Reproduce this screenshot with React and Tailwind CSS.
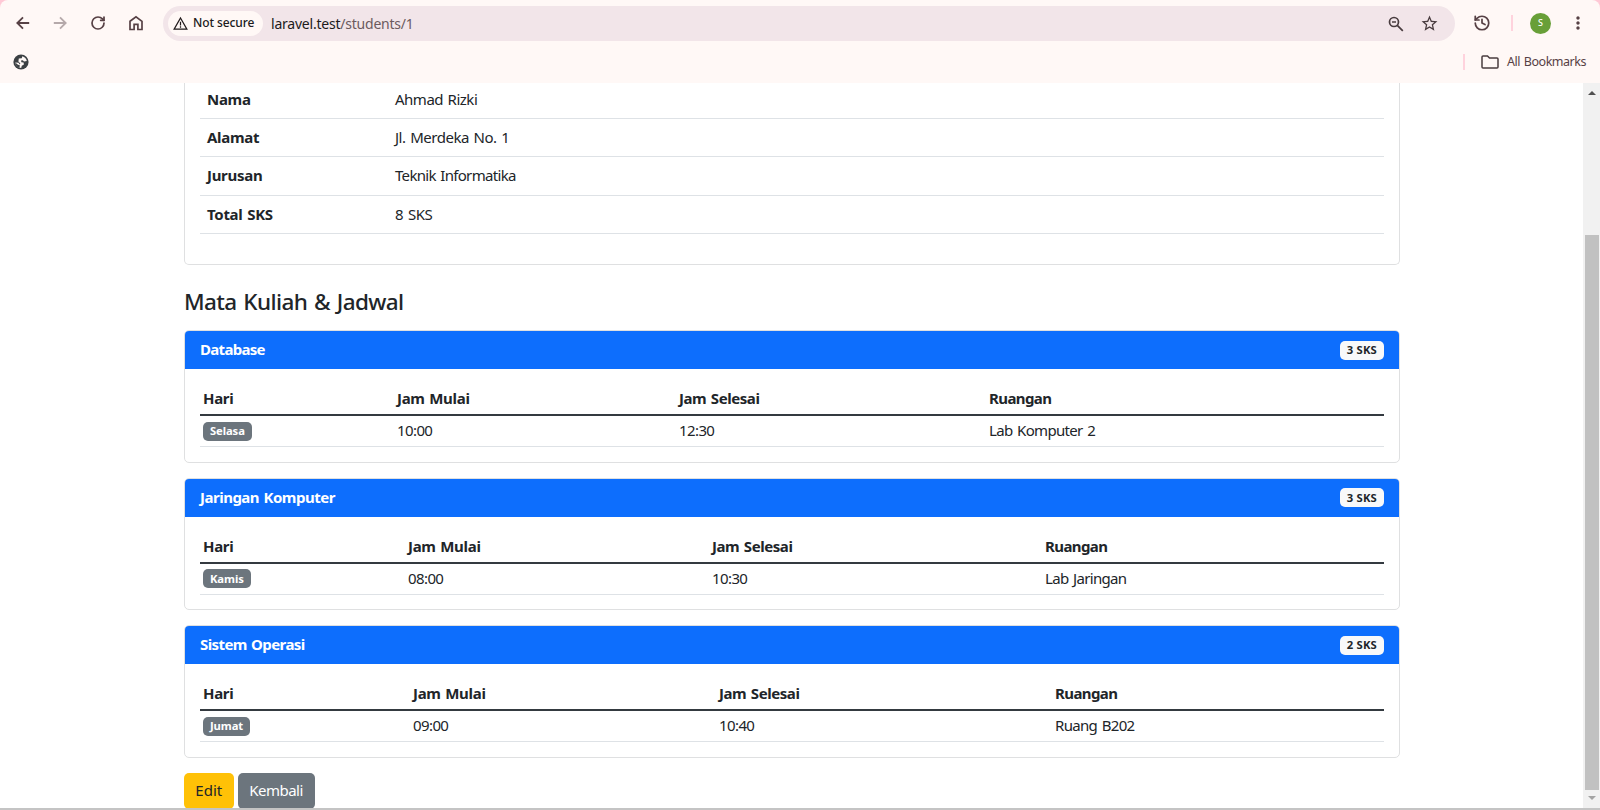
import { History, RotateCw } from "lucide-react";
import { MdStarBorder, MdMoreVert } from "react-icons/md";

const profile = [
  { label: "Nama", value: "Ahmad Rizki", tracking: "tracking-[-0.5px]" },
  { label: "Alamat", value: "Jl. Merdeka No. 1", tracking: "tracking-[-0.48px]" },
  { label: "Jurusan", value: "Teknik Informatika", tracking: "tracking-[-0.68px]" },
  { label: "Total SKS", value: "8 SKS", tracking: "tracking-[-0.4px]" },
];

const courses = [
  {
    name: "Database",
    sks: 3,
    day: "Selasa",
    start: "10:00",
    end: "12:30",
    room: "Lab Komputer 2",
    cols: "grid-cols-[193px_282px_310px_1fr]",
    tracking: "tracking-[-0.7px]",
  },
  {
    name: "Jaringan Komputer",
    sks: 3,
    day: "Kamis",
    start: "08:00",
    end: "10:30",
    room: "Lab Jaringan",
    cols: "grid-cols-[204px_304px_333px_1fr]",
    tracking: "tracking-[-0.5px]",
  },
  {
    name: "Sistem Operasi",
    sks: 2,
    day: "Jumat",
    start: "09:00",
    end: "10:40",
    room: "Ruang B202",
    cols: "grid-cols-[209px_306px_336px_1fr]",
    tracking: "tracking-[-0.6px]",
  },
];

function Arrow({ className }) {
  return (
    <svg viewBox="0 0 16 16" className={className} fill="none" stroke="currentColor" strokeWidth="1.8">
      <path d="M14.2 8H2.5M8 2.3 2.3 8 8 13.7" />
    </svg>
  );
}

function Browser() {
  return (
    <header className="h-[83px] shrink-0 rounded-t-[8px] bg-[#fff8f6] text-[#574145]">
      <div className="flex h-[46px] items-center">
        <Arrow className="ml-[15px] size-4" />
        <Arrow className="ml-[21px] size-4 rotate-180 text-[#b5a9aa]" />
        <RotateCw className="ml-[22px] size-4" strokeWidth={2.6} />
        <svg viewBox="0 0 16 16" className="ml-[22px] size-4" fill="none" stroke="currentColor" strokeWidth="1.7">
          <path d="M2 6.3 8 1.8l6 4.5v8.2H9.9V9.3H6.1v5.2H2z" />
        </svg>
        <div className="ml-[19px] flex h-[35px] w-[1292px] items-center rounded-full bg-[#f2e5e9] pl-[5px] text-[#201a1b]">
          <div className="flex h-[25px] w-[95px] items-center rounded-full bg-[#fff8f6] pl-[5px] whitespace-nowrap">
            <svg viewBox="0 0 16 16" className="size-[15px] shrink-0" fill="none" stroke="currentColor" strokeWidth="1.3">
              <path d="M8 2.2 14.8 14H1.2zM8 6.2v4M8 11v1.4" />
            </svg>
            <span className="ml-[5px] text-[12px] font-medium tracking-[-0.1px]">Not secure</span>
          </div>
          <span className="ml-[8px] text-[14px] tracking-[-0.22px]">
            laravel.test<span className="text-[#6b5a5e]">/students/1</span>
          </span>
          <svg viewBox="0 0 16 16" className="mt-px ml-auto size-4" fill="none" stroke="#493c3f" strokeWidth="1.7">
            <circle cx="6" cy="6" r="4.5" />
            <path d="m9.3 9.3 5.5 5.5M4 6h4" />
          </svg>
          <MdStarBorder className="mr-[16px] ml-[16px] size-[19px] text-[#493c3f]" />
        </div>
        <History className="ml-[18px] size-[18px]" strokeWidth={2.3} />
        <span className="ml-[20px] h-4 w-[2px] bg-[#ffd3dd]" />
        <span className="ml-[17px] flex size-[21px] items-center justify-center rounded-full bg-[#689f38] text-[9px] font-medium text-white">
          S
        </span>
        <MdMoreVert className="ml-[17px] size-[20px]" />
      </div>
      <div className="flex h-[32px] items-center">
        <svg viewBox="0 0 16 16" className="ml-[13px] size-[16px]">
          <circle cx="8" cy="8" r="7.6" fill="#3c4043" />
          <path
            d="M9.3 2.2Q13 3.2 13.8 7L11 7.4 9.8 6.2 8 6.6 8.4 8.2 10.6 8.6 10.9 10.6 8.8 11.8 8.2 13.9Q3 13.4 2.2 8.4L5.6 8.8 6.6 10.4 7.4 9.6 5.4 7.6 5.8 4.6 8.8 4.2z"
            fill="#fff8f6"
          />
          <path d="M2.2 8.4Q3 13.4 6.5 13.8L6.8 11.2 5 10.8z" fill="#3c4043" />
        </svg>
        <span className="ml-auto h-4 w-[2px] bg-[#ffd3dd]" />
        <svg viewBox="0 0 18 14" className="ml-[16px] h-[14px] w-[18px]" fill="none" stroke="#493c3f" strokeWidth="1.5">
          <path d="M1 2q0-1 1-1h4.5l2 2H16q1 0 1 1v8q0 1-1 1H2q-1 0-1-1z" />
        </svg>
        <span className="mr-[14px] ml-[8px] text-[12.5px] tracking-[-0.48px] [word-spacing:1px]">All Bookmarks</span>
      </div>
    </header>
  );
}

function CourseCard({ course }) {
  return (
    <section className="mb-[15px] h-[132.6px] rounded-[5px] border border-[#dfe0e1] bg-white">
      <div className="flex h-[38px] items-center justify-between rounded-t-[4px] bg-[#0d6efd] px-[15px]">
        <h6 className={`pb-[2px] text-[15px] font-bold text-white [word-spacing:1px] ${course.tracking}`}>
          {course.name}
        </h6>
        <span className="flex h-[19px] items-center rounded-[5px] bg-[#f8f9fa] px-[7px] text-[11.25px] font-bold tracking-[0.2px]">
          {course.sks} SKS
        </span>
      </div>
      <div className="px-[15px] pt-[15px]">
        <div className={`grid ${course.cols} h-[32px] items-center border-b-2 border-[#343a40] pb-[2px] font-bold [word-spacing:1px]`}>
          <span className="pl-[3px] tracking-[-0.3px]">Hari</span>
          <span className="pl-[4px] tracking-[-0.3px]">Jam Mulai</span>
          <span className="pl-[4px] tracking-[-0.42px]">Jam Selesai</span>
          <span className="pl-[4px] tracking-[-0.6px]">Ruangan</span>
        </div>
        <div className={`grid ${course.cols} h-[31px] items-center border-b border-[#dee2e6] [word-spacing:1.5px]`}>
          <span className="pl-[3px]">
            <span className="flex h-[19px] w-fit items-center rounded-[5px] bg-[#6c757d] px-[7px] text-[11.25px] font-bold tracking-[-0.1px] text-white">
              {course.day}
            </span>
          </span>
          <span className="pb-[2px] pl-[4px] tracking-[-0.6px]">{course.start}</span>
          <span className="pb-[2px] pl-[4px] tracking-[-0.6px]">{course.end}</span>
          <span className="pb-[2px] pl-[4px] tracking-[-0.7px]">{course.room}</span>
        </div>
      </div>
    </section>
  );
}

export default function App() {
  return (
    <div className="flex h-[810px] w-[1600px] flex-col overflow-hidden bg-[#ffc9d6] font-['Noto_Sans',sans-serif]">
      <Browser />
      <div className="flex min-h-0 flex-1 bg-white">
        <main className="w-[1583px] pl-[184px] text-[15px] leading-[22px] text-[#212529]">
          <div className="w-[1216px]">
            <section className="h-[182px] rounded-b-[5px] border border-t-0 border-[#dfe0e1] px-[15px]">
              {profile.map((row) => (
                <div
                  key={row.label}
                  className="flex h-[38.4px] items-center border-b border-[#dee2e6] pb-[1.5px] pl-[7px] [word-spacing:1.2px] first:h-[36px] first:pb-[3px]"
                >
                  <span className="w-[188px] font-bold tracking-[-0.3px]">{row.label}</span>
                  <span className={row.tracking}>{row.value}</span>
                </div>
              ))}
            </section>
            <h4 className="mt-[22px] mb-[14px] text-[22.5px] leading-[29px] font-medium tracking-[-0.6px] [word-spacing:1.5px]">
              Mata Kuliah &amp; Jadwal
            </h4>
            {courses.map((course) => (
              <CourseCard key={course.name} course={course} />
            ))}
            <div className="flex gap-[4px]">
              <button className="h-[36px] w-[49.5px] rounded-[5px] bg-[#ffc107] pb-[2px]">Edit</button>
              <button className="h-[36px] w-[77px] rounded-[5px] bg-[#6c757d] pb-[2px] tracking-[-0.5px] text-white">
                Kembali
              </button>
            </div>
          </div>
        </main>
        <div className="flex w-[17px] flex-col items-center bg-[#f1f1f1]">
          <span className="mt-[8px] border-x-4 border-b-4 border-x-transparent border-b-[#505050]" />
          <span className="mt-[140px] h-[555px] w-[14px] bg-[#c1c1c1]" />
          <span className="mt-[6px] border-x-4 border-t-4 border-x-transparent border-t-[#a3a3a3]" />
        </div>
      </div>
      <div className="h-[2px] shrink-0 bg-[#c4c4c4]" />
    </div>
  );
}
